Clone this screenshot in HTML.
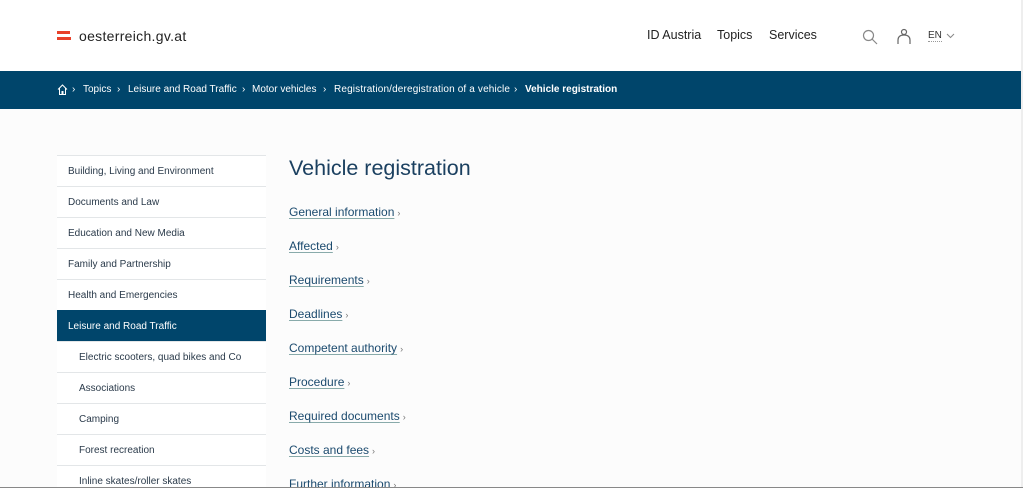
<!DOCTYPE html>
<html><head><meta charset="utf-8"><style>
*{margin:0;padding:0;box-sizing:border-box}
html,body{width:1023px;height:488px;overflow:hidden}
body{background:#fcfcfc;font-family:"Liberation Sans",sans-serif;position:relative}
.hdr{position:absolute;left:0;top:0;width:1021px;height:71px;background:#fff}
.logo{position:absolute;top:28px;font-size:14px;color:#222;letter-spacing:0.3px}
.flag{position:absolute;left:57px;top:31px;width:13px}
.flag i{display:block;height:3px;background:#e8412a;margin-bottom:3px}
.flag i+i{width:14px}
.nav{position:absolute;top:28px;font-size:12.5px;color:#222}
.bc{position:absolute;left:0;top:71px;width:1021px;height:38px;background:#00456b;color:#fff;font-size:10px}
.bc span{position:absolute;top:13px}
.side{position:absolute;left:57px;top:155px;width:209px}
.side div{height:31px;border-top:1px solid #e3e6e8;font-size:10px;color:#2a3a4a;padding:10px 0 0 11px;background:#fff}
.side div.s{padding-left:22px}
.side div.a{background:#00456b;color:#fff;border-top-color:#00456b}
h1{position:absolute;left:289px;top:156px;font-size:21.5px;font-weight:normal;color:#1b4060}
.lk{position:absolute;left:289px;font-size:12px;color:#1b4a6e;text-decoration:underline;text-decoration-color:#8aa;text-underline-offset:2px}
.lk b{font-weight:normal;font-size:9px;color:#777;text-decoration:none;display:inline-block;margin-left:3px}
.sb{position:absolute;left:1021px;top:0;width:2px;height:488px;background:#eee}
.bot{position:absolute;left:0;top:487px;width:1023px;height:1px;background:#888}
</style></head><body>
<div class="hdr">
 <div class="flag"><i></i><i></i></div>
 <div class="logo" style="left:79px">oesterreich.gv.at</div>
 <div class="nav" style="left:647px">ID Austria</div>
 <div class="nav" style="left:717px">Topics</div>
 <div class="nav" style="left:769px">Services</div>
 <svg style="position:absolute;left:862px;top:29px" width="16" height="16" viewBox="0 0 16 16" fill="none" stroke="#888" stroke-width="1.2"><circle cx="6.5" cy="6.5" r="5"/><path d="M10 10l5 5"/></svg>
 <svg style="position:absolute;left:896px;top:28px" width="16" height="17" viewBox="0 0 16 17" fill="none" stroke="#666" stroke-width="1.2"><circle cx="8" cy="4" r="2.5"/><path d="M2 16v-4c0-3 2-5 6-5s6 2 6 5v4"/></svg>
 <div class="nav" style="left:928px;top:30px;font-size:10px;color:#333;border-bottom:1px dotted #999">EN</div>
 <svg style="position:absolute;left:946px;top:33px" width="9" height="6" viewBox="0 0 9 6" fill="none" stroke="#888"><path d="M1 1l3.5 3.5L8 1"/></svg>
</div>
<div class="bc">
 <svg style="position:absolute;left:57px;top:13px" width="11" height="11" viewBox="0 0 11 11" fill="none" stroke="#fff" stroke-width="1"><path d="M1 5.5L5.5 1 10 5.5M2.5 4v6.5h2.5v-3h1v3h2.5V4"/></svg>
 <span style="left:72px">›</span><span style="left:83px">Topics</span>
 <span style="left:117px">›</span><span style="left:128px">Leisure and Road Traffic</span>
 <span style="left:242px">›</span><span style="left:252px">Motor vehicles</span>
 <span style="left:323px">›</span><span style="left:334px;letter-spacing:0.15px">Registration/deregistration of a vehicle</span>
 <span style="left:514px">›</span><span style="left:525px;font-weight:bold">Vehicle registration</span>
</div>
<div class="side">
 <div>Building, Living and Environment</div>
 <div>Documents and Law</div>
 <div>Education and New Media</div>
 <div>Family and Partnership</div>
 <div>Health and Emergencies</div>
 <div class="a">Leisure and Road Traffic</div>
 <div class="s">Electric scooters, quad bikes and Co</div>
 <div class="s">Associations</div>
 <div class="s">Camping</div>
 <div class="s">Forest recreation</div>
 <div class="s">Inline skates/roller skates</div>
</div>
<h1>Vehicle registration</h1>
<div class="lk" style="top:205px">General information<b>›</b></div>
<div class="lk" style="top:239px">Affected<b>›</b></div>
<div class="lk" style="top:273px">Requirements<b>›</b></div>
<div class="lk" style="top:307px">Deadlines<b>›</b></div>
<div class="lk" style="top:341px">Competent authority<b>›</b></div>
<div class="lk" style="top:375px">Procedure<b>›</b></div>
<div class="lk" style="top:409px">Required documents<b>›</b></div>
<div class="lk" style="top:443px">Costs and fees<b>›</b></div>
<div class="lk" style="top:477px">Further information<b>›</b></div>
<div class="sb"></div>
<div class="bot"></div>
</body></html>
